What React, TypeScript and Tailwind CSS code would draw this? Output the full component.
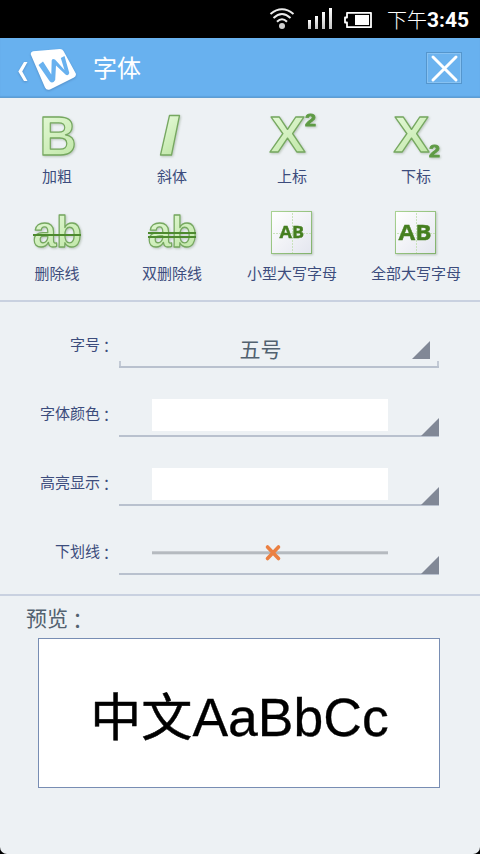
import type { ReactNode } from 'react';

const green = '#5f9b45';

function Defs() {
  return (
    <svg width="0" height="0" className="absolute" aria-hidden="true">
      <defs>
        <linearGradient id="leaf" x1="0" y1="0" x2="0.5" y2="1">
          <stop offset="0" stopColor="#e8fbdc" />
          <stop offset="1" stopColor="#c3e8ab" />
        </linearGradient>
        <linearGradient id="card" x1="0" y1="0" x2="1" y2="1">
          <stop offset="0" stopColor="#ffffff" />
          <stop offset="1" stopColor="#e4e6ef" />
        </linearGradient>
        <linearGradient id="edge" x1="0" y1="0" x2="1" y2="1">
          <stop offset="0" stopColor="#a9d293" />
          <stop offset="1" stopColor="#82b26c" />
        </linearGradient>
        <linearGradient id="signal" x1="0" y1="0" x2="0" y2="1">
          <stop offset="0" stopColor="#ffffff" />
          <stop offset="1" stopColor="#c4c4c4" />
        </linearGradient>
      </defs>
    </svg>
  );
}

function Icon({ children }: { children: ReactNode }) {
  return (
    <svg width="56" height="56" viewBox="0 0 56 56" className="block overflow-visible leading-none drop-shadow-[1px_1px_1px_rgba(70,100,60,0.3)]">
      {children}
    </svg>
  );
}

const glyph = {
  fill: 'url(#leaf)',
  stroke: '#76a860',
  strokeWidth: 1.3,
  strokeLinejoin: 'round' as const,
};

function Ab({ lines }: { lines: number[] }) {
  return (
    <Icon>
      <text x="4" y="46" fontSize="45" textLength="49" lengthAdjust="spacingAndGlyphs" className="font-['Liberation_Sans'] font-bold" {...glyph}>ab</text>
      {lines.map((y) => <rect key={y} x="4" y={y} width="48" height="2" fill="#4d8a2e" />)}
    </Icon>
  );
}

function Caps({ size, x, y, width }: { size: number; x: number; y: number; width: number }) {
  return (
    <Icon>
      <rect x="7.500" y="10.500" width="40" height="42" fill="url(#card)" stroke="url(#edge)" />
      <path d="M28.500 12V52M9 32.500H47" stroke="#c9e2bc" strokeDasharray="2 1" />
      <text x={x} y={y} fontSize={size} textLength={width} lengthAdjust="spacingAndGlyphs" fill="#467f20" stroke="#467f20" strokeWidth=".4" className="font-['Open_Sans'] font-bold">AB</text>
    </Icon>
  );
}

function Script({ y }: { y: number }) {
  return (
    <Icon>
      <text x="5.500" y="48.200" fontSize="50" textLength="36" lengthAdjust="spacingAndGlyphs" className="font-['Liberation_Sans'] font-bold" {...glyph}>X</text>
      <text x="41" y={y} fontSize="17" textLength="11" lengthAdjust="spacingAndGlyphs" fill={green} stroke={green} strokeWidth=".8" className="font-['Liberation_Sans'] font-bold">2</text>
    </Icon>
  );
}

function Tool({ label, children }: { label: string; children: ReactNode }) {
  return (
    <button className="flex h-[97px] flex-col items-center whitespace-nowrap">
      {children}
      <span className="mt-[6px] text-[15px] leading-5">{label}</span>
    </button>
  );
}

function Corner() {
  return (
    <svg width="18" height="18" viewBox="0 0 18 18" className="-mb-px block">
      <path d="M18 0V18H0Z" fill="#818896" />
    </svg>
  );
}

function Colon() {
  return <span className="relative top-[2px] -left-px font-['Noto_Sans_CJK_TC',sans-serif]" lang="zh-TW">：</span>;
}

function Row({ label, children }: { label: string; children: ReactNode }) {
  return (
    <div className="flex h-[69px] items-start">
      <div className="w-[119px] pt-[10px] pr-[4px] text-right text-[15px] leading-5">{label}<Colon /></div>
      <div className="flex h-[44px] w-[320px] items-end justify-end border-b-2 border-[#b9c1ce]">{children}</div>
    </div>
  );
}

function StatusBar() {
  return (
    <div className="flex h-[38px] items-start bg-black pl-[269px] text-white">
      <svg width="105" height="38" viewBox="269 0 105 38" className="block">
        <g fill="none" stroke="#ececec" strokeWidth="2">
          <path d="M270.500 14Q282 4.500 293.500 14" />
          <path d="M273.500 18Q282 10 290.500 18" />
          <path d="M277 21.800Q282 16.500 287 21.800" />
        </g>
        <circle cx="282" cy="26" r="3" fill="#d2d2d2" />
        <g fill="url(#signal)">
          <rect x="308" y="20" width="3" height="9" />
          <rect x="315" y="16" width="3" height="13" />
          <rect x="322" y="12" width="3" height="17" />
          <rect x="329" y="8" width="3" height="21" />
        </g>
        <path d="M347 12.800H371V27.200H347V22.500H345V17.500H347Z" fill="none" stroke="#fff" strokeWidth="1.800" strokeLinejoin="round" />
        <rect x="355" y="15" width="14" height="10" fill="#fff" />
      </svg>
      <div className="flex pl-[13px] pt-[5px] text-[20px] leading-[30px] whitespace-nowrap">
        <span className="font-light">下午</span>
        <span className="font-[Roboto] text-[21px] font-bold">3:45</span>
      </div>
    </div>
  );
}

function Header() {
  return (
    <header className="flex h-[60px] items-center border-b border-[#5e9dd2] bg-[#68b1ef] text-white shadow-[inset_0_-1px_1px_rgba(70,130,190,0.3)]">
      <svg width="80" height="58" viewBox="0 38 80 58" className="block drop-shadow-[0_1px_1px_rgba(50,90,140,0.4)]">
        <path d="M24 61H27.500L22.200 70.500L27.500 80H24L18.300 70.500Z" fill="#fff" />
        <path d="M33 50.200L60 48Q62.500 48 63.500 50L75.800 72.500Q76.500 75 74 76.500L50 88.500Q46.500 89.800 45 86.500L31 54Q30 51 33 50.200Z" fill="#fff" />
        <path d="M38.500 64L43 60.500L51.300 73.500L51.700 59.500Q52 57 55 58.500L64.500 69L60.800 57L64.500 55L69.300 72Q68 75.500 65.500 73.500L56 64.500L55.200 79Q52.500 83.500 49.500 80Z" fill="#68b1ef" />
      </svg>
      <h1 className="ml-[13px] flex-1 text-[24px] leading-9"><span className="relative -top-px">字体</span></h1>
      <button className="mr-[18px] mt-px block">
        <svg width="36" height="32" viewBox="0 0 36 32">
          <rect x=".5" y=".5" width="35" height="31" fill="#6cb3ef" stroke="#5596cd" />
          <rect x="1.500" y="1.500" width="33" height="29" fill="none" stroke="#87c2f2" />
          <path d="M7 5L30 28M30 5L7 28" stroke="#fff" strokeWidth="3" strokeLinecap="round" />
        </svg>
      </button>
    </header>
  );
}

export default function App() {
  return (
    <div className="h-[854px] w-[480px] overflow-hidden bg-black font-['Noto_Sans_CJK_SC',sans-serif] text-[#3c4c7c]">
      <Defs />
      <StatusBar />
      <main className="h-[816px] rounded-b-[7px] bg-[#edf1f4]">
        <Header />
        <section className="grid h-[204px] grid-cols-[114px_116px_124px_124px] content-start border-b-2 border-[#c9d1e0] pt-[6px]">
          <Tool label="加粗">
            <Icon><text x="10.500" y="50.800" fontSize="56" textLength="37" lengthAdjust="spacingAndGlyphs" className="font-['Liberation_Sans'] font-bold" {...glyph}>B</text></Icon>
          </Tool>
          <Tool label="斜体">
            <Icon><path d="M25.500 11.500H35.500L27.500 51H16.500Z" {...glyph} /></Icon>
          </Tool>
          <Tool label="上标"><Script y={22} /></Tool>
          <Tool label="下标"><Script y={53} /></Tool>
          <Tool label="删除线"><Ab lines={[33]} /></Tool>
          <Tool label="双删除线"><Ab lines={[31, 35]} /></Tool>
          <Tool label="小型大写字母"><Caps size={16.5} x={15.5} y={37} width={24.5} /></Tool>
          <Tool label="全部大写字母"><Caps size={22} x={10.5} y={39} width={33} /></Tool>
        </section>
        <section className="h-[294px] border-b-2 border-[#c9d1e0] pt-[22px]">
          <Row label="字号">
            <div className="relative flex h-full w-full items-end">
              <span className="flex-1 pr-[10px] pb-[2px] text-center text-[21px] leading-8 text-[#52616f]">五号</span>
              <span className="mr-[9px] flex pb-[8px]"><Corner /></span>
              <span className="absolute bottom-0 left-0 h-[5px] w-full border-x-2 border-[#c3cad5]" />
            </div>
          </Row>
          <Row label="字体颜色">
            <div className="mr-[33px] mb-[4px] h-8 w-[236px] bg-white" />
            <Corner />
          </Row>
          <Row label="高亮显示">
            <div className="mr-[33px] mb-[4px] h-8 w-[236px] bg-white" />
            <Corner />
          </Row>
          <Row label="下划线">
            <svg width="236" height="32" viewBox="0 0 236 32" className="mr-[33px] mb-[4px] block">
              <rect y="14.300" width="236" height="3" fill="#b5babf" />
              <path d="M115.500 10L126.500 21.500M126.500 10L115.500 21.500" stroke="#eb8042" strokeWidth="3.600" strokeLinecap="round" />
            </svg>
            <Corner />
          </Row>
        </section>
        <section>
          <h2 className="h-[42px] pl-[26px] pt-[5px] text-[21px] leading-8 text-[#52616f]">预览<Colon /></h2>
          <div className="mr-[40px] ml-auto flex h-[150px] w-[402px] items-center justify-center border border-[#788db3] bg-white text-[52px] leading-none text-black">
            <span className="pt-[9px] pl-px whitespace-nowrap font-['Liberation_Sans','Noto_Sans_CJK_SC',sans-serif]"><span className="text-[51px] [-webkit-text-stroke:0.5px_black]">中文</span><span className="text-[53.5px] [-webkit-text-stroke:0.3px_black]">AaBbCc</span></span>
          </div>
        </section>
      </main>
    </div>
  );
}
